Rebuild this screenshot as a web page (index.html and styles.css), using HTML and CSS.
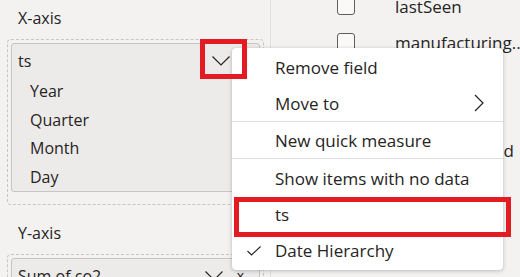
FILE: index.html
```html
<!DOCTYPE html>
<html lang="en">

<head>
    <meta charset="UTF-8">
    <meta name="viewport" content="width=device-width, initial-scale=1.0">
    <title>Field menu</title>
    <link rel="stylesheet" href="styles.css">
</head>

<body>

    <div class="screen">
        <div class="pane-left">
            <div class="section-title">X-axis</div>
            <div class="well">
                <div class="field">
                    <div class="field-head">
                        <span>ts</span>
                        <svg class="chev" width="18" height="10" viewBox="0 0 18 10"><path d="M0.5 0.5 L9 9 L17.5 0.5" fill="none" stroke="#252423" stroke-width="1.2"/></svg>
                    </div>
                    <div class="field-sub">Year</div>
                    <div class="field-sub">Quarter</div>
                    <div class="field-sub">Month</div>
                    <div class="field-sub">Day</div>
                </div>
            </div>

            <div class="section-title second">Y-axis</div>
            <div class="well">
                <div class="field">
                    <div class="field-head">
                        <span>Sum of co2</span>
                        <svg class="chev" width="18" height="10" viewBox="0 0 18 10"><path d="M0.5 0.5 L9 9 L17.5 0.5" fill="none" stroke="#252423" stroke-width="1.2"/></svg>
                        <span class="close">x</span>
                    </div>
                </div>
            </div>
        </div>

        <div class="pane-right">
            <div class="list-row"><span class="check"></span><span>lastSeen</span></div>
            <div class="list-row"><span class="check"></span><span>manufacturing...</span></div>
            <div class="list-row"><span class="check"></span><span>model</span></div>
            <div class="list-row"><span class="check"></span><span>name</span></div>
            <div class="list-row"><span class="check"></span><span>deviceOwnerId</span></div>
        </div>

        <div class="menu">
            <div class="menu-group">
                <div class="menu-item">Remove field</div>
                <div class="menu-item">Move to
                    <svg class="arrow" width="10" height="18" viewBox="0 0 10 18"><path d="M1 1 L9 9 L1 17" fill="none" stroke="#252423" stroke-width="1.2"/></svg>
                </div>
            </div>
            <div class="menu-group">
                <div class="menu-item">New quick measure</div>
            </div>
            <div class="menu-group last">
                <div class="menu-item">Show items with no data</div>
                <div class="menu-item">ts</div>
                <div class="menu-item">
                    <svg class="tick" width="14" height="10" viewBox="0 0 14 10"><path d="M0.5 5 L4.5 9 L13.5 0.5" fill="none" stroke="#252423" stroke-width="1.1"/></svg>
                    Date Hierarchy
                </div>
            </div>
        </div>

        <div class="mark mark-chevron"></div>
        <div class="mark mark-ts"></div>
    </div>

</body>

</html>
```

FILE: styles.css
```css
body {
    margin: 0;
    font-family: "Open Sans", "Noto Sans", sans-serif;
    font-size: 16px;
    color: #252423;
    background-color: #f3f2f1;
}

.screen {
    position: relative;
    display: flex;
    width: 520px;
    height: 277px;
    overflow: hidden;
}

.pane-left {
    width: 270px;
    flex-shrink: 0;
}

.pane-right {
    flex: 1;
    border-left: 1px solid #e1dfdd;
    margin-top: -12px;
    padding-left: 66px;
    font-size: 17px;
}

.section-title {
    box-sizing: border-box;
    height: 39px;
    padding: 6px 0 0 18px;
    line-height: 24px;
}

.section-title.second {
    height: 49px;
    padding-top: 16px;
}

.well {
    margin-left: 7px;
    width: 249px;
    padding: 3px 3px 12px 3px;
    border: 1px dashed #c8c6c4;
    border-radius: 4px;
}

.field {
    background-color: #edebe9;
    border: 1px solid #c8c6c4;
    border-radius: 3px;
}

.field-head {
    display: flex;
    align-items: center;
    height: 33px;
    padding-left: 6px;
    padding-right: 29px;
}

.field-head span:first-child {
    flex: 1;
}

.chev {
    display: block;
}

.close {
    position: relative;
    left: 14px;
    font-size: 14px;
}

.field-sub {
    padding-left: 18px;
    height: 28.5px;
    line-height: 28px;
}

.list-row {
    display: flex;
    align-items: center;
    height: 36px;
}

.check {
    width: 16px;
    height: 16px;
    border: 1px solid #605e5c;
    border-radius: 3px;
    margin-right: 40px;
    background-color: #faf9f8;
}

.menu {
    position: absolute;
    left: 232px;
    top: 48px;
    width: 271px;
    height: 222px;
    box-sizing: border-box;
    padding-top: 1px;
    background-color: #fff;
    border-radius: 4px;
    box-shadow: 0 1px 4px rgba(0, 0, 0, 0.22), 0 0 1px rgba(0, 0, 0, 0.15);
    font-size: 17px;
}

.menu-group + .menu-group {
    border-top: 1px solid #e1dfdd;
}

.menu-group.last {
    padding-top: 1px;
}

.menu-item {
    position: relative;
    display: flex;
    align-items: center;
    height: 36px;
    padding-left: 43px;
}

.arrow {
    position: absolute;
    right: 19px;
    top: 9px;
}

.tick {
    position: absolute;
    left: 15px;
    top: 14px;
}

.mark {
    position: absolute;
    border: 5px solid #e31c23;
    box-sizing: border-box;
}

.mark-chevron {
    left: 200px;
    top: 39px;
    width: 47px;
    height: 40px;
}

.mark-ts {
    left: 234px;
    top: 197px;
    width: 277px;
    height: 40px;
}
```
